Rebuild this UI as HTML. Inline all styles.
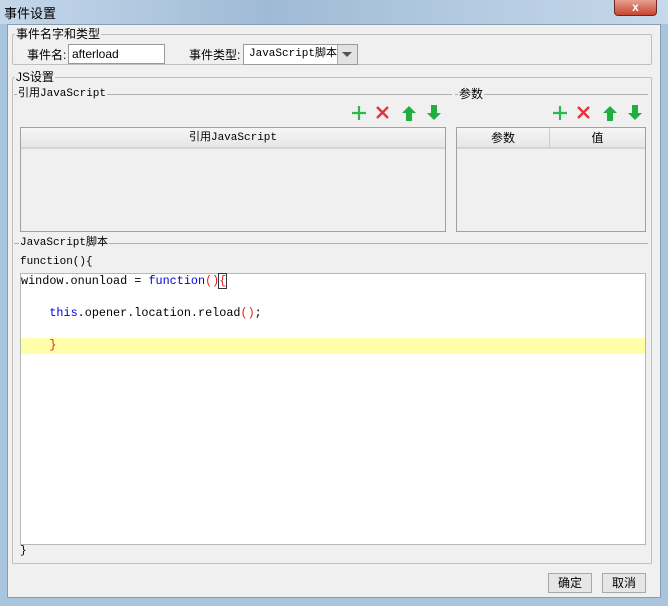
<!DOCTYPE html>
<html><head><meta charset="utf-8"><style>
*{box-sizing:border-box;margin:0;padding:0}
body{width:668px;height:606px;overflow:hidden;background:#a9c4dd;font-family:"Liberation Sans","Noto Sans CJK SC",sans-serif;font-size:12px;color:#000;position:relative}
.a{position:absolute}
.title{left:0;top:0;width:668px;height:24px;background:linear-gradient(90deg,#c4d7ea,#9fbad6 40%,#b3cae0 70%,#c6d8ea)}
.content{left:7px;top:24px;width:654px;height:574px;background:#f0f0f0;border:1px solid #8a9cb0}
.grp{border:1px solid #c0c0b8;border-radius:2px}
.lbl{background:#f0f0f0;padding:0 1px;white-space:nowrap;line-height:14px}
.line{height:1px;background:#b0b0a8}
.tbl{border:1px solid #a0a0a0;background:#f0f0f0}
.hdr{height:21px;background:linear-gradient(#f6f6f6,#e6e6e6);border-bottom:2px solid #d4d4d4;text-align:center;line-height:21px}
.mono{font-family:"Liberation Mono","Noto Sans CJK SC",monospace;font-size:11.4px;white-space:pre}
.code{font-size:11.8px}
.btn{border:1px solid #a8a8a8;background:#e6e6e6;text-align:center;line-height:18px;height:20px;width:44px}
</style></head><body>
<div class="a title"></div>
<div class="a" style="left:4px;top:3px;font-size:13px;color:#000">事件设置</div>
<div class="a" style="left:614px;top:0;width:43px;height:16px;background:linear-gradient(#e8a090,#c84430);border:1px solid #6a2a20;border-top:none;border-radius:0 0 4px 4px;color:#fff;font-weight:bold;text-align:center;line-height:14px;font-size:12px">x</div>
<div class="a content"></div>

<div class="a grp" style="left:12px;top:34px;width:640px;height:31px"></div>
<div class="a lbl" style="left:15px;top:27px">事件名字和类型</div>
<div class="a" style="left:27px;top:46px">事件名:</div>
<div class="a" style="left:68px;top:44px;width:97px;height:20px;background:#fff;border:1px solid #9a9a9a;padding-left:3px;line-height:18px">afterload</div>
<div class="a" style="left:189px;top:46px">事件类型:</div>
<div class="a mono" style="left:243px;top:44px;width:115px;height:21px;background:#fff;border:1px solid #9a9a9a;padding-left:5px;line-height:19px;font-size:11px">JavaScript脚本</div>
<div class="a" style="left:337px;top:45px;width:20px;height:19px;background:#e2e2e2;border-left:1px solid #aaa"></div>
<div class="a" style="left:342px;top:52px;width:0;height:0;border-left:5px solid transparent;border-right:5px solid transparent;border-top:5px solid #555"></div>

<div class="a grp" style="left:12px;top:77px;width:640px;height:487px"></div>
<div class="a lbl" style="left:15px;top:70px">JS设置</div>
<div class="a line" style="left:14px;top:94px;width:438px"></div>
<div class="a lbl mono" style="left:17px;top:87px;font-size:11px">引用JavaScript</div>
<div class="a line" style="left:455px;top:94px;width:193px"></div>
<div class="a lbl" style="left:458px;top:87px">参数</div>

<svg class="a" style="left:350px;top:104px" width="95" height="18" viewBox="0 0 95 18">
<path d="M9 2v14M2 9h14" stroke="#2cb84a" stroke-width="2.2"/>
<path d="M27 3l11 11M38 3L27 14" stroke="#e8323a" stroke-width="2.4"/>
<path d="M59 2l-7 7h4v8h6V9h4z" fill="#1fae3f"/>
<path d="M84 16l-7-7h4V1h6v8h4z" fill="#1fae3f"/>
</svg>
<svg class="a" style="left:551px;top:104px" width="95" height="18" viewBox="0 0 95 18">
<path d="M9 2v14M2 9h14" stroke="#2cb84a" stroke-width="2.2"/>
<path d="M27 3l11 11M38 3L27 14" stroke="#e8323a" stroke-width="2.4"/>
<path d="M59 2l-7 7h4v8h6V9h4z" fill="#1fae3f"/>
<path d="M84 16l-7-7h4V1h6v8h4z" fill="#1fae3f"/>
</svg>

<div class="a tbl" style="left:20px;top:127px;width:426px;height:105px"><div class="hdr mono" style="font-size:11px">引用JavaScript</div></div>
<div class="a tbl" style="left:456px;top:127px;width:190px;height:105px"><div class="hdr" style="display:flex"><div style="width:93px;border-right:1px solid #ccc">参数</div><div style="width:95px">值</div></div></div>

<div class="a line" style="left:14px;top:243px;width:634px"></div>
<div class="a lbl mono" style="left:19px;top:236px;font-size:11px">JavaScript脚本</div>
<div class="a mono" style="left:20px;top:256px;font-size:11px">function(){</div>

<div class="a" style="left:20px;top:273px;width:626px;height:272px;background:#fff;border:1px solid #b8b8b0"></div>
<div class="a" style="left:21px;top:338px;width:624px;height:16px;background:#ffffaa"></div>
<div class="a mono code" style="left:21px;top:273px;line-height:16px">window.onunload = <span style="color:#0000e0">function</span><span style="color:#e02020">()</span><span style="color:#e02020;outline:1px solid #334;">{</span>

    <span style="color:#0000e0">this</span>.opener.location.reload<span style="color:#e02020">()</span>;

    <span style="color:#e02020">}</span></div>
<div class="a mono" style="left:20px;top:545px;font-size:11px">}</div>

<div class="a btn" style="left:548px;top:573px">确定</div>
<div class="a btn" style="left:602px;top:573px">取消</div>
</body></html>
